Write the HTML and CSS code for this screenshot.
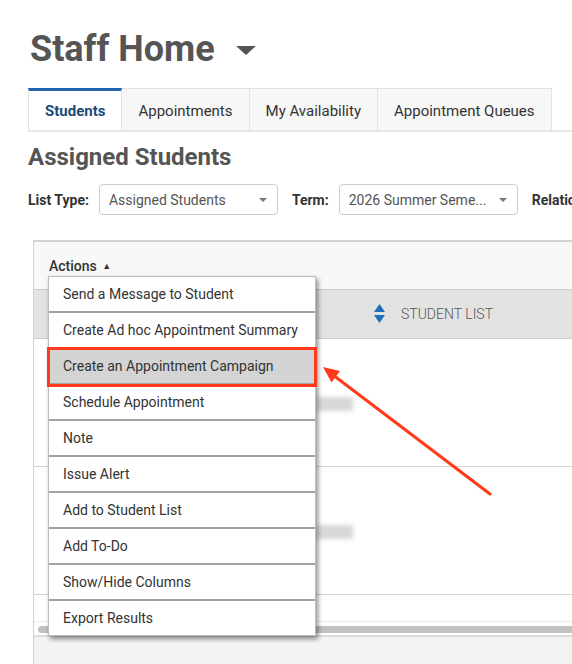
FILE: index.html
```html
<!doctype html>
<html lang="en">
<head>
    <meta charset="UTF-8">
    <title>Staff Home</title>
    <link rel="stylesheet" href="styles.css">
</head>
<body>

<div class="page">

    <div class="title-bar">
        <h1>Staff Home</h1>
        <span class="title-caret"></span>
    </div>

    <ul class="tabs">
        <li class="tab active">Students</li>
        <li class="tab">Appointments</li>
        <li class="tab">My Availability</li>
        <li class="tab">Appointment Queues</li>
    </ul>

    <h2 class="section-title">Assigned Students</h2>

    <div class="filters">
        <span class="filter-label">List Type:</span>
        <div class="select"><span>Assigned Students</span><i class="caret"></i></div>
        <span class="filter-label">Term:</span>
        <div class="select"><span>2026 Summer Seme...</span><i class="caret"></i></div>
        <span class="filter-label">Relationship:</span>
    </div>

    <div class="grid-panel">
        <div class="grid-toolbar">
            <span class="actions-toggle">Actions <span class="up">&#9650;</span></span>
        </div>

        <ul class="actions-menu">
            <li>Send a Message to Student</li>
            <li>Create Ad hoc Appointment Summary</li>
            <li class="picked">Create an Appointment Campaign</li>
            <li>Schedule Appointment</li>
            <li>Note</li>
            <li>Issue Alert</li>
            <li>Add to Student List</li>
            <li>Add To-Do</li>
            <li>Show/Hide Columns</li>
            <li>Export Results</li>
        </ul>

        <div class="grid-head">
            <div class="col-select"></div>
            <div class="col-list">
                <svg class="sort-icon" width="11" height="20" viewBox="0 0 11 20">
                    <path d="M5.5 0 L11 8 L0 8 Z" fill="#1f6fbf"/>
                    <path d="M0 11 L11 11 L5.5 19 Z" fill="#1f6fbf"/>
                </svg>
                <span>STUDENT LIST</span>
            </div>
        </div>

        <div class="grid-row"><span class="blur"></span></div>
        <div class="grid-row"><span class="blur"></span></div>
        <div class="grid-row short"></div>

        <div class="scroll-track"><div class="scroll-thumb"></div></div>
        <div class="grid-foot"></div>
    </div>

    <svg class="callout" width="572" height="664" viewBox="0 0 572 664">
        <line x1="490" y1="494" x2="333" y2="375" stroke="#ff3a1a" stroke-width="3" stroke-linecap="round"/>
        <polygon points="323,367 340,371 331.5,382.5" fill="#ff3a1a"/>
    </svg>

</div>

</body>
</html>
```

FILE: styles.css
```css
body{
    margin:0;
    padding:0;
    width: 572px;
    height: 664px;
    overflow: hidden;
    font-family: Roboto, "Liberation Sans", Arial, sans-serif;
    color: #333;
    background: #fff;
}
.page{
    position: relative;
    width: 572px;
    height: 664px;
    padding-left: 28px;
    box-sizing: border-box;
    white-space: nowrap;
}

/* title */
.title-bar{
    display: flex;
    align-items: center;
    padding: 27px 0 0 2px;
}
.title-bar h1{
    margin: 0;
    font-size: 36px;
    line-height: 44px;
    font-weight: 700;
    color: #555;
}
.title-caret{
    width: 0;
    height: 0;
    margin-left: 21px;
    margin-top: 2px;
    border-left: 10px solid transparent;
    border-right: 10px solid transparent;
    border-top: 9px solid #555;
}

/* tabs */
.tabs{
    display: flex;
    list-style: none;
    margin: 17px 0 0 0;
    padding: 0;
    border-bottom: 2px solid #e6e6e6;
}
.tab{
    flex-shrink: 0;
    height: 38px;
    line-height: 38px;
    padding: 3px 16px 0 16px;
    font-size: 15px;
    color: #333;
    background: #f7f7f7;
    border: 1px solid #e2e2e2;
    border-bottom: none;
    border-left: none;
}
.tab.active{
    background: #fff;
    border-top: 3px solid #1d64ad;
    border-left: 1px solid #e2e2e2;
    height: 37px;
    line-height: 37px;
    padding-top: 2px;
    font-weight: 700;
    color: #1b4b78;
}

.section-title{
    margin: 11px 0 0 0;
    font-size: 24px;
    line-height: 28px;
    font-weight: 700;
    color: #555;
}

/* filters */
.filters{
    display: flex;
    align-items: center;
    margin-top: 13px;
}
.filter-label{
    flex-shrink: 0;
    font-size: 14px;
    font-weight: 700;
    color: #333;
    margin-right: 10px;
}
.select{
    flex-shrink: 0;
    display: flex;
    align-items: center;
    justify-content: space-between;
    width: 179px;
    height: 31px;
    box-sizing: border-box;
    padding: 0 10px 0 9px;
    margin-right: 14px;
    border: 1px solid #ccc;
    border-radius: 4px;
    font-size: 14px;
    color: #555;
}
.caret{
    width: 0;
    height: 0;
    border-left: 4px solid transparent;
    border-right: 4px solid transparent;
    border-top: 4px solid #777;
}

/* grid */
.grid-panel{
    position: relative;
    width: 600px;
    margin: 25px 0 0 5px;
    border: 1px solid #d2d2d2;
    border-top: 2px solid #d2d2d2;
}
.grid-toolbar{
    height: 47px;
    box-sizing: border-box;
    padding: 14px 0 0 15px;
    background: #f8f8f8;
}
.actions-toggle{
    font-size: 14px;
    line-height: 16px;
    font-weight: 500;
    color: #333;
}
.actions-toggle .up{
    font-size: 9px;
    vertical-align: 2px;
    margin-left: 2px;
}

.grid-head{
    display: flex;
    align-items: center;
    height: 48px;
    background: #e3e3e3;
    border-top: 1px solid #cfcfcf;
    border-bottom: 1px solid #cfcfcf;
}
.col-select{
    width: 340px;
}
.col-list{
    display: flex;
    align-items: center;
    font-size: 14px;
    font-weight: 300;
    color: #555;
}
.sort-icon{
    margin-right: 16px;
}

.grid-row{
    height: 128px;
    box-sizing: border-box;
    padding: 58px 0 0 282px;
    border-bottom: 1px solid #d4d4d4;
}
.grid-row.short{
    height: 27px;
    padding: 0;
    border-bottom: 1px solid #ececec;
}
.blur{
    display: block;
    width: 37px;
    height: 14px;
    background: #d8d8d8;
    filter: blur(2px);
}

.scroll-track{
    height: 15px;
    box-sizing: border-box;
    padding: 4px 0 0 4px;
    border-bottom: 2px solid #dcdcdc;
}
.scroll-thumb{
    height: 7px;
    border-radius: 4px;
    background: #c1c1c1;
}
.grid-foot{
    height: 40px;
    background: #f3f3f3;
}

/* actions dropdown */
.actions-menu{
    position: absolute;
    top: 34px;
    left: 14px;
    z-index: 2;
    width: 268px;
    margin: 0;
    padding: 0;
    list-style: none;
    background: #fff;
    border: 1px solid #bdbdbd;
    box-sizing: border-box;
    box-shadow: 2px 3px 5px rgba(0,0,0,0.45);
}
.actions-menu li{
    height: 34px;
    line-height: 34px;
    padding-left: 14px;
    font-size: 14px;
    color: #333;
    border-bottom: 2px solid #a3a3a3;
}
.actions-menu li:last-child{
    border-bottom: none;
}
.actions-menu li.picked{
    position: relative;
    background: #d4d4d4;
    outline: 3px solid #ff3a1a;
    outline-offset: -1px;
}

/* annotation arrow */
.callout{
    position: absolute;
    top: 0;
    left: 0;
    z-index: 3;
    pointer-events: none;
}
```
